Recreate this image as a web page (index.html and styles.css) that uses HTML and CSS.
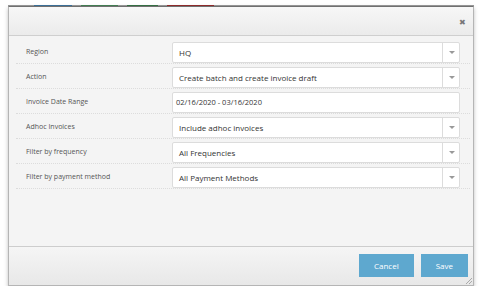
FILE: index.html
```html
<!DOCTYPE html>
<html lang="en">
<head>
    <meta charset="UTF-8">
    <title>Create Invoice Batch</title>
    <link rel="stylesheet" href="styles.css">
</head>
<body>
    <div class="backdrop-strip">
        <span class="seg seg-blue"></span>
        <span class="seg seg-green"></span>
        <span class="seg seg-dkgreen"></span>
        <span class="seg seg-red"></span>
    </div>
    <div class="dialog">
        <div class="dialog-header">
            <span class="close">&#x2716;</span>
        </div>
        <div class="dialog-body">
            <div class="form-row">
                <label>Region</label>
                <div class="select"><span>HQ</span><i class="caret"></i></div>
            </div>
            <div class="form-row">
                <label>Action</label>
                <div class="select"><span>Create batch and create invoice draft</span><i class="caret"></i></div>
            </div>
            <div class="form-row">
                <label>Invoice Date Range</label>
                <div class="input">02/16/2020 - 03/16/2020</div>
            </div>
            <div class="form-row">
                <label>Adhoc Invoices</label>
                <div class="select"><span>Include adhoc invoices</span><i class="caret"></i></div>
            </div>
            <div class="form-row">
                <label>Filter by frequency</label>
                <div class="select"><span>All Frequencies</span><i class="caret"></i></div>
            </div>
            <div class="form-row">
                <label>Filter by payment method</label>
                <div class="select"><span>All Payment Methods</span><i class="caret"></i></div>
            </div>
        </div>
        <div class="dialog-footer">
            <button class="btn">Cancel</button>
            <button class="btn">Save</button>
            <span class="grip"></span>
        </div>
    </div>
</body>
</html>
```

FILE: styles.css
```css
body {
    margin: 0;
    background-color: #fff;
    font-family: "Open Sans", Arial, sans-serif;
    font-size: 7px;
    color: #555;
}
.backdrop-strip {
    display: flex;
    height: 1px;
    margin: 5px 7px 0 8px;
    background-color: #9a9a9a;
}
.seg {
    display: block;
    height: 1px;
}
.seg-blue { width: 38px; margin-left: 26px; background-color: #3b6f97; }
.seg-green { width: 37px; margin-left: 9px; background-color: #437d52; }
.seg-dkgreen { width: 31px; margin-left: 9px; background-color: #356f43; }
.seg-red { width: 47px; margin-left: 9px; background-color: #8e2b2b; }
.dialog {
    width: 464px;
    margin-left: 8px;
    border: 1px solid #b5b5b5;
    border-top-color: #707070;
    box-shadow: 0 2px 4px rgba(0, 0, 0, 0.25);
    background-color: #f4f4f4;
}
.dialog-header {
    height: 28px;
    display: flex;
    align-items: center;
    justify-content: flex-end;
    padding: 0 7px;
    background: linear-gradient(#f7f7f7, #ebebeb);
    border-bottom: 1px solid #cfcfcf;
}
.close {
    font-size: 8px;
    color: #777;
}
.dialog-body {
    height: 207px;
    padding: 3px 3px 0 7px;
    background-color: #f4f4f4;
    border-bottom: 1px solid #cdcdcd;
}
.form-row {
    display: flex;
    align-items: center;
    height: 22px;
    padding: 2px 10px 0 10px;
    border-bottom: 1px dotted #dcdcdc;
}
.form-row label {
    width: 146px;
    margin-top: -2px;
}
.select, .input {
    flex: 1;
    display: flex;
    align-items: center;
    height: 19px;
    border: 1px solid #dcdcdc;
    border-radius: 2px;
    background-color: #fff;
    color: #333;
    font-size: 8px;
}
.select span {
    flex: 1;
    padding-left: 6px;
}
.input {
    padding-left: 3px;
    font-size: 7.5px;
}
.caret {
    width: 16px;
    height: 19px;
    border-left: 1px solid #dcdcdc;
    position: relative;
}
.caret::after {
    content: "";
    position: absolute;
    left: 6px;
    top: 8px;
    border-left: 3px solid transparent;
    border-right: 3px solid transparent;
    border-top: 3px solid #999;
}
.dialog-footer {
    position: relative;
    height: 31px;
    display: flex;
    justify-content: flex-end;
    align-items: flex-start;
    gap: 7px;
    padding: 7px 5px 0 0;
    background: linear-gradient(#f5f5f5, #e8e8e8);
}
.btn {
    height: 23px;
    padding: 0 15px;
    border: none;
    background-color: #5ea8cf;
    color: #fff;
    font-family: "Open Sans", Arial, sans-serif;
    font-size: 8px;
    cursor: pointer;
}
.grip {
    position: absolute;
    right: 1px;
    bottom: 1px;
    width: 6px;
    height: 6px;
    background: linear-gradient(135deg, transparent 45%, #aaa 45%, #aaa 55%, transparent 55%, transparent 70%, #aaa 70%, #aaa 80%, transparent 80%);
}
```
